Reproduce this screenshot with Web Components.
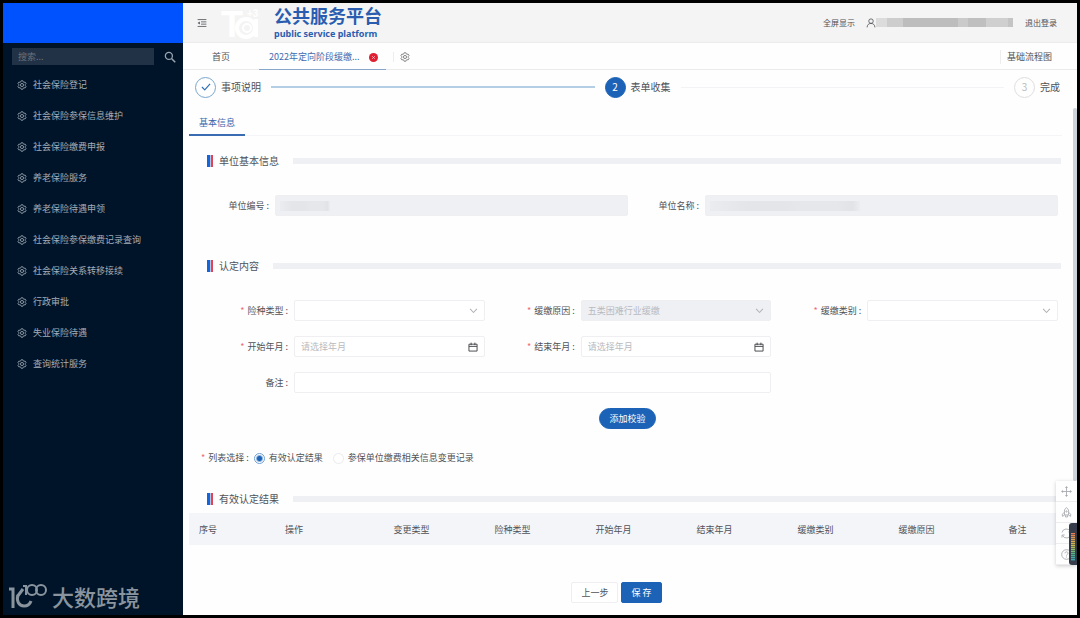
<!DOCTYPE html>
<html lang="zh-CN">
<head>
<meta charset="utf-8">
<meta name="viewport" content="width=device-width, initial-scale=1">
<title>公共服务平台</title>
<style>
  :root {
    --blue: #1c63b7;
    --ink: #505257;
    --muted: #b9bbc0;
    --line: #efeff2;
    --fill: #eff0f4;
  }
  body {
    margin: 0;
    background: #000;
    font: 9px/14px "Noto Sans CJK SC", "Noto Sans", sans-serif;
    color: var(--ink);
  }
</style>
</head>
<body>
<app-shell>
  <side-nav slot="side">
    <nav-item>社会保险登记</nav-item>
    <nav-item>社会保险参保信息维护</nav-item>
    <nav-item>社会保险缴费申报</nav-item>
    <nav-item>养老保险服务</nav-item>
    <nav-item>养老保险待遇申领</nav-item>
    <nav-item>社会保险参保缴费记录查询</nav-item>
    <nav-item>社会保险关系转移接续</nav-item>
    <nav-item>行政审批</nav-item>
    <nav-item>失业保险待遇</nav-item>
    <nav-item>查询统计服务</nav-item>
  </side-nav>
  <app-header></app-header>
  <tab-bar></tab-bar>
  <step-bar></step-bar>
  <work-area>
    <section-title>单位基本信息</section-title>
    <form-grid cols="2">
      <form-field label="单位编号" kind="masked" mask="50"></form-field>
      <form-field label="单位名称" kind="masked" mask="150"></form-field>
    </form-grid>
    <section-title spaced>认定内容</section-title>
    <form-grid cols="3">
      <form-field label="险种类型" kind="select" required></form-field>
      <form-field label="缓缴原因" kind="select" value="五类困难行业缓缴" required disabled></form-field>
      <form-field label="缓缴类别" kind="select" required></form-field>
      <form-field label="开始年月" kind="month" required></form-field>
      <form-field label="结束年月" kind="month" required></form-field>
      <form-field label="备注" kind="text" wide></form-field>
    </form-grid>
    <action-row><ui-button kind="pill">添加校验</ui-button></action-row>
    <list-choice></list-choice>
    <section-title>有效认定结果</section-title>
    <result-table></result-table>
    <action-row footer>
      <ui-button>上一步</ui-button>
      <ui-button kind="primary">保 存</ui-button>
    </action-row>
  </work-area>
  <float-tools slot="overlay"></float-tools>
</app-shell>

<script>
const define = (name, render) => customElements.define(name, class extends HTMLElement {
  connectedCallback() {
    if (this.shadowRoot) return;
    const template = document.createElement('template');
    template.innerHTML = render(this);
    this.attachShadow({ mode: 'open' }).append(template.content.cloneNode(true));
  }
});

const icons = {
  gear: '<path d="M6.7 1.2h2.6l.6 1.7 1.3.8 1.8-.4 1.4 2.4-1.2 1.5v1.6l1.2 1.5-1.4 2.4-1.8-.4-1.3.8-.6 1.7H6.7l-.6-1.7-1.3-.8-1.8.4-1.4-2.4 1.2-1.5V7.200L1.600 5.700 3 3.300l1.800.4 1.300-.8z"/><circle cx="8" cy="8" r="2.500"/>',
  search: '<circle cx="6.500" cy="6.500" r="4.700" stroke-width="1.700"/><path d="M10 10l5 5" stroke-width="2"/>',
  fold: '<path d="M1 2.500h14M6.500 6.200H15M6.500 9.800H15M1 13.500h14"/><path d="M4.500 5.500v5L1 8z" fill="currentColor" stroke="none"/>',
  user: '<circle cx="8" cy="5" r="3.600"/><path d="M1.800 15c0-4 2.500-6.300 6.200-6.300s6.200 2.300 6.200 6.300"/>',
  check: '<path d="M1.500 8l4.500 4.500L14.500 3" stroke-width="1.900"/>',
  down: '<path d="M2 5l6 6.500L14 5" stroke-width="1.800"/>',
  calendar: '<path d="M1.500 3.500h13v11h-13zM1.500 7h13M5 1v4M11 1v4" stroke-width="1.500"/>',
  close: '<path d="M4 4l8 8M12 4l-8 8" stroke-width="2"/>',
  move: '<path d="M8 2v12M2 8h12"/><path d="M8 0l2.200 3H5.800zM8 16l2.200-3H5.800zM0 8l3-2.200v4.400zM16 8l-3-2.200v4.400z" fill="currentColor" stroke="none"/>',
  rocket: '<path d="M5 11.500V6c0-2.500 1.500-4 3-5 1.500 1 3 2.500 3 5v5.500zM5 7.500l-3 3v3l3-1.500M11 7.500l3 3v3l-3-1.500M6.500 12v2.500h3V12"/><circle cx="8" cy="6.500" r="1"/>',
  reload: '<path d="M1.500 6.500a6.500 6.500 0 0 1 12.300-1.200M14.500 9.500A6.500 6.500 0 0 1 2.200 10.700M14.500 2v3.800h-3.800M1.500 14v-3.800h3.800"/>',
  help: '<circle cx="8" cy="8" r="7"/><path d="M5.800 6.300c0-3 4.500-2.800 4.500 0 0 1.500-2.300 1.500-2.300 3.300M8 11v1.300"/>'
};

define('ui-icon', el => `
  <style>
    :host { display: block; flex: none; width: 10px; height: 10px; }
    svg { display: block; width: 100%; height: 100%; fill: none; stroke: currentColor; stroke-width: 1.3; stroke-linejoin: round; }
  </style>
  <svg viewBox="0 0 16 16" aria-hidden="true">${icons[el.getAttribute('name')]}</svg>`);

define('app-shell', () => `
  <style>
    :host { display: grid; grid-template-columns: 180px minmax(0, 1fr); position: relative; box-sizing: border-box;
      min-height: 100vh; border: 3px solid #000; background: #fefefe; }
    main { display: flex; flex-direction: column; min-width: 0; }
  </style>
  <slot name="side"></slot>
  <main><slot></slot></main>
  <slot name="overlay"></slot>`);

define('side-nav', () => `
  <style>
    :host { display: flex; flex-direction: column; background: #001429; color: #a3adb8; }
    .brand { height: 40px; background: #0052ff; }
    form { display: flex; align-items: center; gap: 10px; margin: 5px 7px 4px 9px; }
    input { flex: 1; min-width: 0; height: 17px; box-sizing: border-box; border: 0; padding: 0 6px; background: #213246;
      color: #a3adb8; font: inherit; }
    input::placeholder { color: #66727f; opacity: 1; }
    button { border: 0; padding: 0; background: none; color: #9aa5b1; }
    ui-icon { width: 12px; height: 12px; }
    nav { flex: 1; }
    footer { display: flex; align-items: center; gap: 5px; padding: 0 6px 3px; color: #8a949e; }
    footer svg { width: 38px; height: 26px; fill: none; stroke: currentColor; }
    footer span { font-size: 22px; font-weight: 500; line-height: 32px; }
  </style>
  <div class="brand"></div>
  <form role="search">
    <input type="text" aria-label="搜索" placeholder="搜索...">
    <button type="button" aria-label="搜索"><ui-icon name="search"></ui-icon></button>
  </form>
  <nav><slot></slot></nav>
  <footer>
    <svg viewBox="0 0 38 26" aria-hidden="true">
      <path d="M0 6h4v19" stroke-width="3"/>
      <path d="M8 14l6-8M9 12c-2 6 1 11 6 11 4 0 6-2 7-5" stroke-width="3"/>
      <path d="M14 3h3v9" stroke-width="2"/>
      <circle cx="23" cy="7" r="5" stroke-width="2"/>
      <circle cx="32" cy="7" r="5" stroke-width="2"/>
    </svg>
    <span>大数跨境</span>
  </footer>`);

define('nav-item', () => `
  <style>
    :host { display: block; }
    a { display: flex; align-items: center; gap: 6px; height: 31px; padding: 0 14px; color: inherit; text-decoration: none; }
  </style>
  <a href="#"><ui-icon name="gear"></ui-icon><span><slot></slot></span></a>`);

define('app-header', () => `
  <style>
    :host { display: flex; align-items: center; height: 40px; box-sizing: border-box; padding: 0 20px 0 14px;
      background: #f4f4f4; border-bottom: 1px solid #ececec; font-size: 8px; }
    button { border: 0; padding: 0; background: none; color: inherit; font: inherit; }
    .logo { width: 40px; height: 34px; margin: 0 13px 0 14px; overflow: visible; }
    .logo text { font-family: "Liberation Sans", sans-serif; font-weight: 700; fill: #fff; }
    .name { flex: 1; color: #2a5db0; font-weight: 700; }
    h1 { margin: 0; font-size: 18px; line-height: 23px; }
    p { margin: 0; font: 700 9px/14px "Noto Sans", sans-serif; }
    .user { display: flex; align-items: center; margin: 0 12px 0 11px; }
    .mask { width: 137px; height: 9px; background: linear-gradient(90deg, #dcdcdc 0 8%, #cdcdcd 8% 20%, #bdbdbd 20% 60%, #cacaca 60% 67%, #bfbfbf 67% 80%, #cfcfcf 80% 96%, #c4c4c4 96%); }
  </style>
  <button type="button" aria-label="折叠菜单"><ui-icon name="fold"></ui-icon></button>
  <svg class="logo" viewBox="0 0 40 34" aria-hidden="true">
    <text x="0" y="31" font-size="36">T</text>
    <g fill="none" stroke="#fff"><circle cx="25" cy="22" r="9" stroke-width="4"/><circle cx="26" cy="22" r="4" stroke-width="2"/><path d="M35 13v18" stroke-width="4"/></g>
    <text x="26" y="11" font-size="10">+3</text>
  </svg>
  <div class="name"><h1>公共服务平台</h1><p>public service platform</p></div>
  <button type="button">全屏显示</button>
  <div class="user"><ui-icon name="user"></ui-icon><span class="mask"></span></div>
  <button type="button">退出登录</button>`);

define('tab-bar', () => `
  <style>
    :host { display: flex; align-items: stretch; height: 27px; box-sizing: border-box; border-bottom: 1px solid #ebebee; }
    a { display: flex; align-items: center; color: inherit; text-decoration: none; }
    .home { padding: 2px 29px 0; }
    .current { gap: 9px; padding: 2px 8px 0 10px; margin-bottom: -1px; border-bottom: 1px solid #86a7c9; color: #3f6cb0; }
    .dot { display: grid; place-items: center; width: 9px; height: 9px; border-radius: 50%; background: #e01f33; color: #fff; }
    .dot ui-icon { width: 5px; height: 5px; }
    .set { align-self: center; margin: 2px auto 0 7px; border: 0; border-left: 1px solid #ededed; padding: 0 0 0 6px; background: none; color: #6d6d6d; }
    .flow { align-self: center; margin-top: 1px; border-left: 1px solid #ededed; padding: 0 25px 0 6px; }
  </style>
  <a class="home" href="#">首页</a>
  <a class="current" href="#" aria-current="page">2022年定向阶段缓缴...<span class="dot"><ui-icon name="close"></ui-icon></span></a>
  <button class="set" type="button" aria-label="标签设置"><ui-icon name="gear"></ui-icon></button>
  <a class="flow" href="#">基础流程图</a>`);

define('step-bar', () => `
  <style>
    :host { display: block; }
    ol { display: flex; align-items: center; gap: 10px; height: 34px; margin: 0; padding: 0 17px 0 12px; list-style: none; font-size: 10px; }
    li { display: flex; align-items: center; gap: 5px; }
    li.rule { flex: 1; height: 1px; background: #f3f3f5; }
    li.done { height: 2px; background: #b3cee5; }
    b { display: grid; place-items: center; width: 21px; height: 21px; box-sizing: border-box; border: 1px solid #dedede; border-radius: 50%;
      color: #bcbcbc; font-weight: 400; }
    b.past { border-color: #7ba5cf; color: #2f6fb8; }
    b.now { border-color: var(--blue); background: var(--blue); color: #fff; }
  </style>
  <ol>
    <li><b class="past"><ui-icon name="check"></ui-icon></b>事项说明</li>
    <li class="rule done" role="presentation"></li>
    <li aria-current="step"><b class="now">2</b>表单收集</li>
    <li class="rule" role="presentation"></li>
    <li><b>3</b>完成</li>
  </ol>`);

define('work-area', () => `
  <style>
    :host { display: block; padding: 6px 9px 12px 6px; }
    nav { display: flex; margin-right: 6px; border-bottom: 1px solid #f5f5f7; }
    nav a { margin-bottom: -1px; border-bottom: 2px solid #3a6cb3; padding: 6px 10px 4px; color: #3a66ad; text-decoration: none; }
  </style>
  <nav><a href="#" aria-current="page">基本信息</a></nav>
  <slot></slot>`);

define('section-title', () => `
  <style>
    :host { display: flex; align-items: center; margin: 15px 7px 0 18px; }
    :host([spaced]) { margin-top: 40px; }
    i { width: 3px; height: 12px; border-right: 1px solid #b8c3dd; background: #1466dc; }
    i + i { width: 2px; border: 0; background: #e04358; }
    h2 { margin: 0 14px 0 6px; font-size: 10px; font-weight: 400; line-height: 20px; }
    span { flex: 1; height: 6px; background: var(--fill); }
  </style>
  <i></i><i></i><h2><slot></slot></h2><span></span>`);

define('form-grid', el => `
  <style>
    :host { display: grid; grid-template-columns: repeat(${el.getAttribute('cols')}, minmax(0, 1fr)); row-gap: 15px;
      margin: 24px 10px 0 9px; --label: ${el.getAttribute('cols') === '2' ? 77 : 96}px; }
  </style>
  <slot></slot>`);

define('form-field', el => {
  const kind = el.getAttribute('kind');
  const off = el.hasAttribute('disabled') || kind === 'masked' ? 'disabled' : '';
  const control = kind === 'select'
    ? `<select id="c" ${off}><option>${el.getAttribute('value') || ''}</option></select><ui-icon class="end" name="down"></ui-icon>`
    : kind === 'month'
      ? '<input id="c" type="text" placeholder="请选择年月"><ui-icon class="end dark" name="calendar"></ui-icon>'
      : `<input id="c" type="text" ${off}>${kind === 'masked' ? '<span class="mask"></span>' : ''}`;
  return `
  <style>
    :host { display: grid; grid-template-columns: var(--label) minmax(0, 1fr); align-items: center; }
    :host([wide]) { grid-column: 1 / span 2; }
    label { display: flex; justify-content: flex-end; }
    .star { margin-right: 3px; color: #ee6a74; }
    .colon { margin: 0 6px 0 2px; }
    .box { display: grid; align-items: center; }
    .box > * { grid-area: 1 / 1; }
    input, select { appearance: none; width: 100%; height: 21px; box-sizing: border-box; border: 1px solid var(--line); border-radius: 2px;
      padding: 0 6px; background: #fff; color: var(--ink); font: inherit; }
    :disabled { background: var(--fill); color: var(--muted); opacity: 1; }
    input::placeholder { color: var(--muted); opacity: 1; }
    .end { justify-self: end; width: 9px; height: 9px; margin-right: 7px; color: #b0b0b5; pointer-events: none; }
    .dark { width: 10px; height: 10px; color: #44464b; }
    .mask { width: ${el.getAttribute('mask') || 0}px; height: 10px; margin-left: 5px; background: linear-gradient(90deg, #ebecf0, #e4e5e9 25% 50%, #e6e7eb 60% 85%, #e2e3e7 95%, #ecedf1); }
  </style>
  <label for="c">${el.hasAttribute('required') ? '<span class="star">*</span>' : ''}${el.getAttribute('label')}<span class="colon">:</span></label>
  <div class="box">${control}</div>`;
});

define('action-row', () => `
  <style>
    :host { display: flex; justify-content: center; gap: 3px; margin-top: 15px; padding-right: 2px; }
    :host([footer]) { margin-top: 37px; padding-right: 24px; }
  </style>
  <slot></slot>`);

define('ui-button', () => `
  <style>
    :host { display: block; }
    button { height: 21px; box-sizing: border-box; border: 1px solid var(--line); border-radius: 2px; padding: 0 9px; background: #fff;
      color: var(--ink); font: inherit; }
    :host([kind]) button { border-color: var(--blue); background: var(--blue); color: #fff; }
    :host([kind=pill]) button { border-radius: 11px; }
  </style>
  <button type="button"><slot></slot></button>`);

define('list-choice', () => `
  <style>
    :host { display: block; margin: 19px 0 21px 12px; }
    .row { display: flex; align-items: center; height: 20px; }
    .star { margin-right: 3px; color: #ee6a74; }
    .colon { margin: 0 5px 0 2px; }
    label { display: flex; align-items: center; gap: 4px; margin-right: 10px; }
    input { appearance: none; width: 11px; height: 11px; box-sizing: border-box; margin: 0; border: 1px solid #ebebee; border-radius: 50%; background: #fff; }
    input:checked { border: 1px solid #6f9fd2; background: radial-gradient(circle, var(--blue) 0 2px, #fff 4px); }
  </style>
  <div class="row" role="radiogroup" aria-labelledby="t">
    <span class="star">*</span><span id="t">列表选择</span><span class="colon">:</span>
    <label><input type="radio" name="list" checked>有效认定结果</label>
    <label><input type="radio" name="list">参保单位缴费相关信息变更记录</label>
  </div>`);

define('result-table', () => `
  <style>
    :host { display: block; margin-top: 4px; }
    table { width: 100%; border-collapse: collapse; table-layout: fixed; background: #f4f5f9; }
    th { height: 32px; box-sizing: border-box; padding: 1px 0 0; font-weight: 400; text-align: center; }
    .no { width: 38px; }
    .op { width: 134px; }
  </style>
  <table>
    <thead><tr>
      <th class="no" scope="col">序号</th><th class="op" scope="col">操作</th><th scope="col">变更类型</th>
      <th scope="col">险种类型</th><th scope="col">开始年月</th><th scope="col">结束年月</th>
      <th scope="col">缓缴类别</th><th scope="col">缓缴原因</th><th scope="col">备注</th>
    </tr></thead>
  </table>`);

define('float-tools', () => `
  <style>
    :host { position: absolute; top: 105px; right: 0; display: flex; flex-direction: column; align-items: flex-end; }
    .thumb { width: 4px; height: 373px; background: #cdd3da; border-radius: 2px; }
    .tools { display: grid; width: 21px; background: #fefefe; box-shadow: 0 1px 4px #0003; }
    button { display: grid; place-items: center; height: 21px; border: 0; border-bottom: 1px solid #ededf0; padding: 0; background: none; color: #a9abb0; }
    ui-icon { width: 11px; height: 11px; }
    .meter { position: absolute; right: 0; bottom: 0; display: grid; width: 8px; height: 42px; box-sizing: border-box; border-radius: 3px 0 0 3px; padding: 10px 2px 4px; background: #363c49; }
    .meter span { background: repeating-linear-gradient(#363c4900 0 1px, #363c4999 1px 2px), linear-gradient(#e87b55, #c9c04f 45%, #4fb58a 75%, #3ba3b8); }
  </style>
  <div class="thumb"></div>
  <div class="tools">
    <button type="button" aria-label="移动"><ui-icon name="move"></ui-icon></button>
    <button type="button" aria-label="快捷"><ui-icon name="rocket"></ui-icon></button>
    <button type="button" aria-label="刷新"><ui-icon name="reload"></ui-icon></button>
    <button type="button" aria-label="帮助"><ui-icon name="help"></ui-icon></button>
  </div>
  <div class="meter"><span></span></div>`);
</script>
</body>
</html>
